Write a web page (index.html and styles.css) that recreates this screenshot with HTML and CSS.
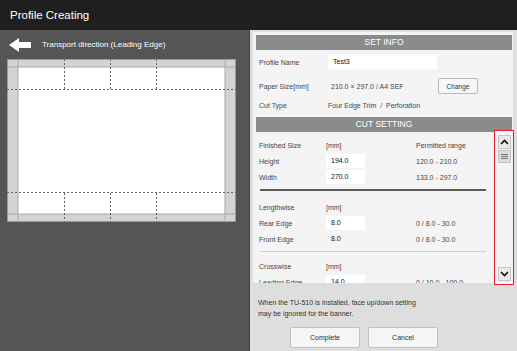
FILE: index.html
```html
<!DOCTYPE html>
<html lang="en">
<head>
  <meta charset="UTF-8" />
  <title>Profile Creating</title>
  <link rel="stylesheet" href="styles.css">
</head>
<body>
  <header class="topbar">Profile Creating</header>

  <div class="screen">
    <section class="preview">
      <div class="direction">
        <svg class="arrow" width="22" height="14" viewBox="0 0 22 14">
          <polygon points="0,7 10,0 10,4 22,4 22,10 10,10 10,14" fill="#fff"/>
        </svg>
        <span>Transport direction (Leading Edge)</span>
      </div>

      <!-- sheet with trim strips and perforation lines -->
      <svg class="sheet" width="229" height="163" viewBox="0 0 229 163">
        <rect x="0.5" y="0.5" width="228" height="162" fill="#d3d3d3" stroke="#9a9a9a"/>
        <rect x="11" y="8" width="207" height="147" fill="#fff"/>
        <line x1="0" y1="8" x2="229" y2="8" stroke="#a9a9a9"/>
        <line x1="0" y1="155" x2="229" y2="155" stroke="#a9a9a9"/>
        <line x1="11" y1="0" x2="11" y2="163" stroke="#a9a9a9"/>
        <line x1="218" y1="0" x2="218" y2="163" stroke="#a9a9a9"/>
        <g stroke="#666" stroke-dasharray="2 2">
          <line x1="0" y1="30.5" x2="229" y2="30.5"/>
          <line x1="0" y1="133.5" x2="229" y2="133.5"/>
          <line x1="57.5" y1="0" x2="57.5" y2="30"/>
          <line x1="103.5" y1="0" x2="103.5" y2="30"/>
          <line x1="149.5" y1="0" x2="149.5" y2="30"/>
          <line x1="57.5" y1="134" x2="57.5" y2="163"/>
          <line x1="103.5" y1="134" x2="103.5" y2="163"/>
          <line x1="149.5" y1="134" x2="149.5" y2="163"/>
        </g>
      </svg>
    </section>

    <section class="settings">
      <div class="card">
        <div class="bar">SET INFO</div>
        <div class="info">
          <div class="info-row r1">
            <span class="label">Profile Name</span>
            <span class="field wide">Test3</span>
          </div>
          <div class="info-row r2">
            <span class="label">Paper Size[mm]</span>
            <span class="value">210.0 × 297.0 / A4 SEF</span>
            <button class="small-btn">Change</button>
          </div>
          <div class="info-row r3">
            <span class="label">Cut Type</span>
            <span class="value cut">Four Edge Trim&nbsp; /&nbsp; Perforation</span>
          </div>
        </div>

        <div class="bar">CUT SETTING</div>
        <div class="cut-body">
          <div class="cut-fields">
            <div class="grid">
              <span>Finished Size</span><span>[mm]</span><span>Permitted range</span>
              <span>Height</span><span class="field">194.0</span><span>120.0 - 210.0</span>
              <span>Width</span><span class="field">270.0</span><span>133.0 - 297.0</span>
            </div>
            <hr class="rule-dark">
            <div class="grid">
              <span>Lengthwise</span><span>[mm]</span><span></span>
              <span>Rear Edge</span><span class="field">8.0</span><span>0 / 8.0 - 30.0</span>
              <span>Front Edge</span><span class="field flat">8.0</span><span>0 / 8.0 - 30.0</span>
            </div>
            <hr class="rule-light">
            <div class="grid">
              <span>Crosswise</span><span>[mm]</span><span></span>
              <span>Leading Edge</span><span class="field">14.0</span><span>0 / 10.0 - 100.0</span>
            </div>
          </div>

          <div class="scroll">
            <div class="sb-btn">
              <svg width="9" height="6" viewBox="0 0 9 6"><polyline points="1,5 4.5,1.5 8,5" fill="none" stroke="#111" stroke-width="1.6"/></svg>
            </div>
            <div class="sb-thumb">
              <svg width="7" height="6" viewBox="0 0 7 6"><g stroke="#777"><line x1="0" y1="0.5" x2="7" y2="0.5"/><line x1="0" y1="2.5" x2="7" y2="2.5"/><line x1="0" y1="4.5" x2="7" y2="4.5"/></g></svg>
            </div>
            <div class="sb-track"></div>
            <div class="sb-btn">
              <svg width="9" height="6" viewBox="0 0 9 6"><polyline points="1,1 4.5,4.5 8,1" fill="none" stroke="#111" stroke-width="1.6"/></svg>
            </div>
          </div>
        </div>
      </div>

      <p class="note">When the TU-510 is installed, face up/down setting<br>may be ignored for the banner.</p>

      <div class="actions">
        <button class="btn">Complete</button>
        <button class="btn">Cancel</button>
      </div>
    </section>
  </div>
</body>
</html>
```

FILE: styles.css
```css
body {
  margin: 0;
  width: 517px;
  height: 351px;
  overflow: hidden;
  font-family: 'Liberation Sans', Arial, sans-serif;
  background: #dedede;
}

.topbar {
  height: 30px;
  line-height: 30px;
  padding-left: 10px;
  background: #1f1f1f;
  color: #fff;
  font-size: 11.5px;
}

.screen {
  display: flex;
  height: 321px;
}

/* left: preview */
.preview {
  width: 249px;
  background: #555555;
  border-right: 1px solid #3c3c3c;
}

.direction {
  height: 29px;
  display: flex;
  align-items: center;
  padding-left: 9px;
  color: #fff;
  font-size: 8px;
}

.arrow {
  margin-right: 11px;
}

.sheet {
  display: block;
  margin-left: 7px;
}

/* right: settings */
.settings {
  flex: 1;
  background: #dedede;
  padding-top: 2px;
}

.card {
  height: 251px;
  margin: 0 4px 0 3px;
  padding: 3px 1px 0 3px;
  background: #f4f4f4;
  box-sizing: border-box;
  display: flex;
  flex-direction: column;
}

.bar {
  height: 15px;
  line-height: 15px;
  background: #8b8b8b;
  color: #fff;
  font-size: 8.5px;
  text-align: center;
}

.info {
  padding-bottom: 3px;
  font-size: 7px;
  color: #444;
}

.info-row {
  display: flex;
  align-items: center;
  padding-left: 3px;
}

.info-row.r1 { height: 16px; margin-top: 4px; }
.info-row.r2 { height: 20px; margin-top: 6px; }
.info-row.r3 { height: 18px; }

.label {
  width: 69px;
}

.value {
  width: 107px;
  padding-left: 3px;
}

.value.cut {
  padding-left: 0;
  width: auto;
}

.field {
  background: #fff;
  color: #111;
  height: 14px;
  line-height: 14px;
  padding-left: 5px;
  box-sizing: border-box;
}

.field.wide {
  width: 109px;
}

.field.flat {
  background: transparent;
}

.small-btn {
  width: 40px;
  height: 16px;
  padding: 0;
  font-family: inherit;
  font-size: 6.5px;
  color: #333;
  background: #f6f6f6;
  border: 1px solid #b9b9b9;
  border-radius: 2px;
}

.cut-body {
  flex: 1;
  display: flex;
  min-height: 0;
}

.cut-fields {
  flex: 1;
  overflow: hidden;
  padding-top: 5px;
  font-size: 7px;
  color: #444;
}

.grid {
  display: grid;
  grid-template-columns: 67px 90px auto;
  grid-auto-rows: 16px;
  align-items: center;
  padding-left: 3px;
}

.grid .field {
  width: 39px;
  padding-left: 5px;
}

.rule-dark {
  margin: 4px 8px 8px 4px;
  border: 0;
  height: 2px;
  background: #5a5a5a;
}

.rule-light {
  margin: 4px 8px 6px 4px;
  border: 0;
  height: 1px;
  background: #cfcfcf;
}

.scroll {
  width: 20px;
  margin: -2px -2px -2px 0;
  border: 1.5px solid #e3222b;
  box-sizing: border-box;
  padding: 4px 2px 3px 2.5px;
  display: flex;
  flex-direction: column;
  background: #f4f4f4;
}

.sb-btn,
.sb-thumb {
  height: 14px;
  display: flex;
  align-items: center;
  justify-content: center;
  background: #e9e9e9;
  border: 1px solid #c4c4c4;
  box-sizing: border-box;
}

.sb-thumb {
  height: 13px;
  margin-top: 1px;
  background: #dcdcdc;
}

.sb-track {
  flex: 1;
}

.note {
  margin: 14px 0 0 8px;
  font-size: 7px;
  line-height: 11px;
  color: #333;
}

.actions {
  display: flex;
  gap: 8px;
  margin: 8px 0 0 40px;
}

.btn {
  width: 70px;
  height: 21px;
  padding: 0;
  font-family: inherit;
  font-size: 7px;
  color: #333;
  background: #f5f5f5;
  border: 1px solid #c2c2c2;
  border-radius: 2px;
}
```
